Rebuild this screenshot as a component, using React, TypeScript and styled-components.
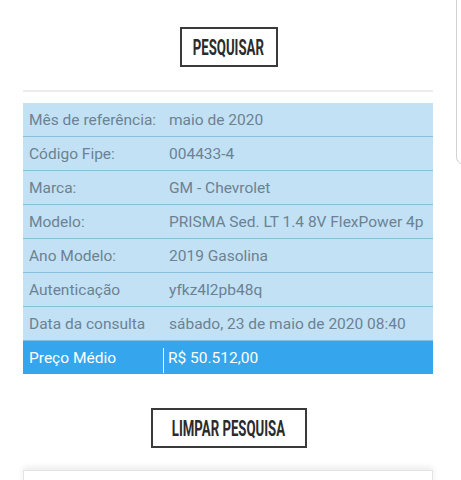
import React from "react";
import styled, { createGlobalStyle } from "styled-components";

const GlobalStyle = createGlobalStyle`
  html, body {
    margin: 0;
    padding: 0;
    background: #ffffff;
  }
  body {
    font-family: Roboto, "Liberation Sans", sans-serif;
    overflow: hidden;
  }
`;

type Row = { label: string; value: string };

const rows: Row[] = [
  { label: "Mês de referência:", value: "maio de 2020" },
  { label: "Código Fipe:", value: "004433-4" },
  { label: "Marca:", value: "GM - Chevrolet" },
  { label: "Modelo:", value: "PRISMA Sed. LT 1.4 8V FlexPower 4p" },
  { label: "Ano Modelo:", value: "2019 Gasolina" },
  { label: "Autenticação", value: "yfkz4l2pb48q" },
  { label: "Data da consulta", value: "sábado, 23 de maio de 2020 08:40" },
];

function App() {
  return (
    <Page>
      <GlobalStyle />
      <SidePanel />
      <Centered>
        <OutlineButton $width={98}>
          <ButtonText>PESQUISAR</ButtonText>
        </OutlineButton>
      </Centered>
      <Divider />
      <Table>
        {rows.map((r) => (
          <TableRow key={r.label}>
            <Label>{r.label}</Label>
            <Value>{r.value}</Value>
          </TableRow>
        ))}
        <PriceRow>
          <PriceLabel>Preço Médio</PriceLabel>
          <PriceValue>R$ 50.512,00</PriceValue>
        </PriceRow>
      </Table>
      <Centered $top={34}>
        <OutlineButton $width={156}>
          <ButtonText>LIMPAR PESQUISA</ButtonText>
        </OutlineButton>
      </Centered>
      <NextCard />
    </Page>
  );
}

const Page = styled.div`
  position: relative;
  width: 461px;
  height: 480px;
  overflow: hidden;
  padding: 27px 28px 0 23px;
  box-sizing: border-box;
  background: #fff;
`;

const SidePanel = styled.div`
  position: absolute;
  left: 456px;
  top: -10px;
  width: 30px;
  height: 175px;
  border: 1px solid #d2d2d2;
  border-radius: 8px;
  box-sizing: border-box;
`;

const Centered = styled.div<{ $top?: number }>`
  display: flex;
  justify-content: center;
  padding-left: 1px;
  margin-top: ${(p) => p.$top ?? 0}px;
`;

const OutlineButton = styled.div<{ $width: number }>`
  width: ${(p) => p.$width}px;
  height: 40px;
  box-sizing: border-box;
  border: 2px solid #3a3a3a;
  display: flex;
  align-items: center;
  justify-content: center;
  overflow: hidden;
`;

const ButtonText = styled.span`
  display: inline-block;
  font-family: Roboto, "Liberation Sans", sans-serif;
  font-weight: bold;
  font-size: 22px;
  line-height: 1;
  color: #2b2b2b;
  white-space: nowrap;
  transform: scaleX(0.6);
  margin-top: 1px;
`;

const Divider = styled.div`
  margin-top: 23px;
  height: 2px;
  background: #ececec;
`;

const Table = styled.div`
  margin-top: 11px;
  display: flex;
  flex-direction: column;
`;

const TableRow = styled.div`
  display: flex;
  align-items: center;
  height: 34px;
  box-sizing: border-box;
  background: #c2e1f5;
  border-bottom: 1px solid #86bedc;
  font-size: 15.5px;
  color: #6c8293;
  &:last-of-type {
    border-bottom: none;
  }
`;

const Label = styled.div`
  width: 140px;
  padding-left: 6px;
  box-sizing: border-box;
  white-space: nowrap;
`;

const Value = styled.div`
  padding-left: 6px;
  white-space: nowrap;
`;

const PriceRow = styled.div`
  display: flex;
  align-items: stretch;
  height: 33px;
  background: #35a6ee;
  color: #ffffff;
  font-size: 15.5px;
`;

const PriceLabel = styled.div`
  width: 140px;
  padding-left: 6px;
  box-sizing: border-box;
  display: flex;
  align-items: center;
`;

const PriceValue = styled.div`
  display: flex;
  align-items: center;
  margin-top: 7px;
  margin-bottom: 1px;
  padding-left: 4px;
  padding-bottom: 6px;
  border-left: 1.5px solid #ffffff;
`;

const NextCard = styled.div`
  margin-top: 22px;
  height: 30px;
  border: 1px solid #e4e4e4;
  border-bottom: none;
  box-shadow: 0 -3px 6px rgba(0, 0, 0, 0.08);
`;

export default App;
